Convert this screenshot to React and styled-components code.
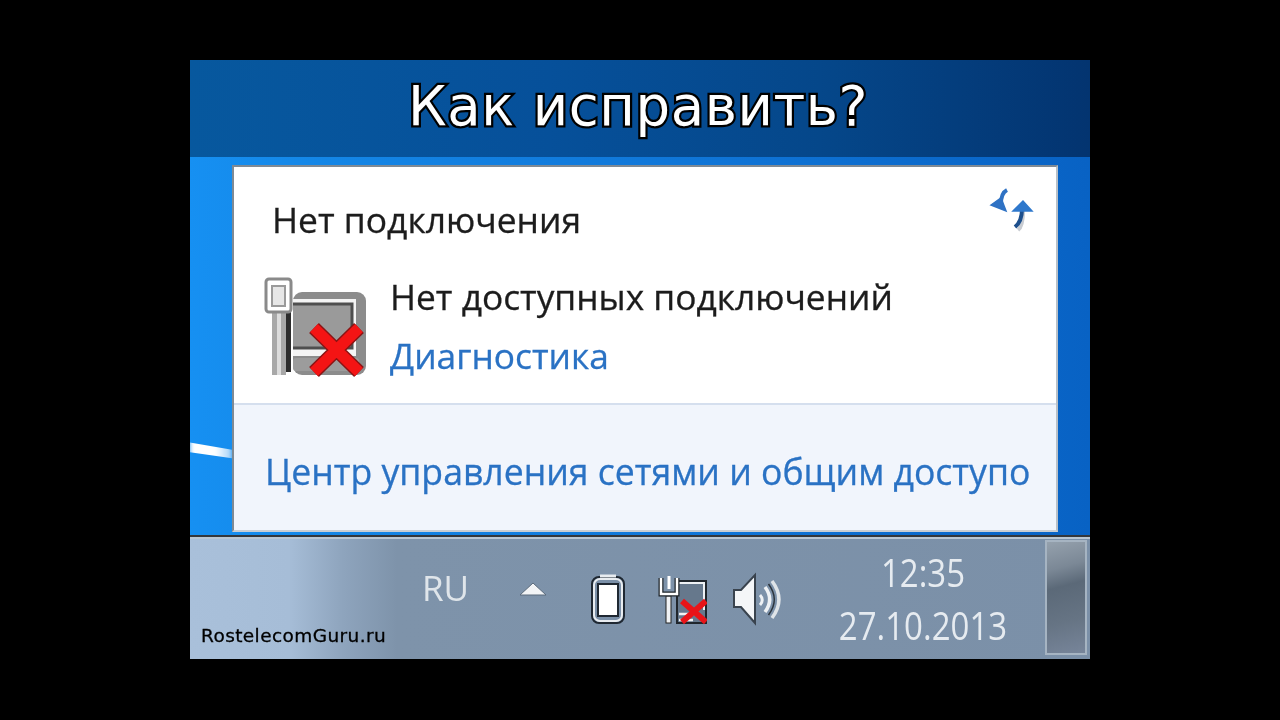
import React from 'react'
import styled, { createGlobalStyle } from 'styled-components'

const GlobalStyle = createGlobalStyle`
  html, body { margin: 0; padding: 0; background: #000; }
  body { font-family: "Open Sans", "Noto Sans", sans-serif; }
`

const Page = styled.div`
  width: 1280px;
  height: 720px;
  background: #000;
  display: flex;
  justify-content: center;
  padding-top: 60px;
  box-sizing: border-box;
  overflow: hidden;
`

const Screen = styled.div`
  width: 900px;
  height: 599px;
  display: flex;
  flex-direction: column;
  position: relative;
  filter: blur(0.7px);
`

const Header = styled.header`
  height: 92px;
  padding: 0 4px 7px 0;
  box-sizing: content-box;
  flex: none;
  display: flex;
  align-items: center;
  justify-content: center;
  margin-bottom: -2px;
  background: linear-gradient(90deg, #07589e 0%, #06509a 40%, #05478a 70%, #033470 100%);
`

const Title = styled.h1`
  margin: 0;
  font-family: "DejaVu Sans", sans-serif;
  font-weight: 400;
  font-size: 54.5px;
  letter-spacing: 0.6px;
  color: #fff;
  -webkit-text-stroke: 4.5px #000;
  paint-order: stroke fill;
`

const Desktop = styled.main`
  height: 380px;
  flex: none;
  position: relative;
  box-sizing: border-box;
  padding: 8px 32px 3px 42px;
  display: flex;
  background: linear-gradient(90deg, #1690f2 0%, #1486e6 15%, #0f74d6 60%, #0862c4 100%);
  border-bottom: 2px solid #33373c;
`

const Streak = styled.div`
  position: absolute;
  left: 0;
  top: 282px;
  width: 42px;
  height: 24px;
  background: linear-gradient(90deg, #fff, #fff 60%, rgba(255,255,255,0.6));
  clip-path: polygon(0 15%, 100% 45%, 100% 80%, 0 55%);
  filter: blur(2px);
`

const Popup = styled.section`
  flex: 1;
  display: flex;
  flex-direction: column;
  background: #fff;
  border: 2px solid #7f8a94;
  border-bottom-color: #c9ced4;
  border-right-color: #b8c0c8;
`

const MainPane = styled.div`
  height: 238px;
  flex: none;
  box-sizing: border-box;
  position: relative;
  padding: 30px 24px 0 38px;
  border-bottom: 2px solid #d5dfee;
`

const PopupTitle = styled.div`
  font-size: 35.4px;
  line-height: 44px;
  color: #1c1c1c;
  -webkit-text-stroke: 0.3px #1c1c1c;
`

const SyncButton = styled.div`
  position: absolute;
  right: 20px;
  top: 20px;
  width: 50px;
  height: 50px;
`

const Row = styled.div`
  display: flex;
  margin: 25px 0 0 -17px;
`

const Info = styled.div`
  margin-left: 15px;
  padding-top: 8px;
  display: flex;
  flex-direction: column;
  gap: 15px;
`

const RowTitle = styled.div`
  font-size: 35.3px;
  line-height: 44px;
  color: #1c1c1c;
  white-space: nowrap;
  -webkit-text-stroke: 0.3px #1c1c1c;
`

const LinkText = styled.a`
  font-size: ${({ $size }) => $size}px;
  line-height: 44px;
  color: #2a72c4;
  white-space: nowrap;
  -webkit-text-stroke: 0.3px #2a72c4;
`

const Footer = styled.div`
  flex: 1;
  background: #f1f5fc;
  padding: 44px 0 0 31px;
`

const Taskbar = styled.footer`
  flex: 1;
  position: relative;
  display: flex;
  align-items: flex-start;
  background: linear-gradient(90deg, #a9c0da 0%, #a6bdd7 11%, #8ea4bd 17%, #7e93aa 23%, #7b90a8 100%);
  border-top: 2px solid #b9c7d4;
  box-sizing: border-box;
`

const Watermark = styled.div`
  position: absolute;
  left: 11px;
  bottom: 11px;
  font-size: 18.5px;
  line-height: 24px;
  color: #000;
  letter-spacing: 0.4px;
  font-family: "DejaVu Sans", sans-serif;
  -webkit-text-stroke: 0.3px #000;
`

const Tray = styled.div`
  display: flex;
  align-items: center;
  height: 100%;
  padding-left: 232px;
`

const Lang = styled.div`
  font-size: 35px;
  line-height: 40px;
  color: #dfe5ea;
  width: 97px;
  margin-top: -22px;
`

const TrayIcon = styled.div`
  flex: none;
  width: ${({ $w }) => $w}px;
  height: 56px;
  margin-right: ${({ $gap }) => $gap}px;
  margin-top: ${({ $top }) => $top - 4}px;
`

const Clock = styled.div`
  width: 180px;
  text-align: center;
  margin-top: 2px;
  margin-left: 51px;
  font-size: 33px;
  line-height: 46px;
  color: #e6ebf0;
  transform: scaleY(1.15);
`

const ShowDesktop = styled.div`
  position: absolute;
  right: 3px;
  top: 1px;
  bottom: 4px;
  width: 42px;
  border: 2px solid #a6b4c2;
  box-sizing: border-box;
  background: linear-gradient(165deg, #95a1ad 0%, #7b8896 24%, #5b6978 40%, #667484 70%, #77859a 100%);
`

const NetworkIcon = () => (
  <svg width="120" height="120" viewBox="0 0 120 120">
    <rect x="38" y="26" width="73" height="83" rx="9" fill="#8c8c8c" />
    <path d="M38 33H101V90H38" fill="#f4f4f4" />
    <path d="M38 38H97V82H38" fill="#9a9a9a" stroke="#4e4e4e" strokeWidth="3" />
    <rect x="38" y="92" width="66" height="13" rx="3" fill="#9c9c9c" />
    <rect x="17" y="46" width="14" height="63" fill="#a8a8a8" />
    <rect x="31" y="46" width="5" height="60" fill="#2c2c2c" />
    <rect x="22" y="46" width="4" height="63" fill="#dcdcdc" />
    <rect x="11" y="13" width="25" height="33" rx="3" fill="#fff" stroke="#8a8a8a" strokeWidth="3" />
    <rect x="17" y="20" width="13" height="20" fill="#e6e6e6" stroke="#9a9a9a" strokeWidth="2" />
    <path d="M59 62L104 106M104 62L59 106" stroke="#8a1414" strokeWidth="14" />
    <path d="M59 62L104 106M104 62L59 106" stroke="#f41414" strokeWidth="11" />
  </svg>
)

const SyncIcon = () => (
  <svg width="50" height="50" viewBox="0 0 50 50">
    <path d="M21 3C17 5 15 9 15 17" fill="none" stroke="#2f72c4" strokeWidth="4" />
    <path d="M5 18L15 11L20 24Z" fill="#2f72c4" stroke="#2f72c4" strokeWidth="1.5" />
    <path d="M32 43C36 40 37 34 37 24" fill="none" stroke="#c8ccd2" strokeWidth="4" />
    <path d="M29 40C34 36 36 30 36 22" fill="none" stroke="#1d4f8c" strokeWidth="4" />
    <path d="M37 14L27 24L46 24Z" fill="#2f78cc" stroke="#2f78cc" strokeWidth="1.5" />
  </svg>
)

const ArrowIcon = () => (
  <svg width="28" height="20" viewBox="0 0 28 20">
    <path d="M1 16L14 4L27 16Z" fill="#f2f4f6" stroke="#5b6b7c" strokeWidth="1" />
  </svg>
)

const BatteryIcon = () => (
  <svg width="38" height="56" viewBox="0 0 38 56">
    <rect x="3" y="6" width="32" height="46" rx="7" fill="#7b90a8" stroke="#1f2832" strokeWidth="2" />
    <path d="M11 5h16" stroke="#e8ecf0" strokeWidth="3" />
    <rect x="5" y="8" width="28" height="42" rx="6" fill="none" stroke="#e8ecf0" strokeWidth="2" />
    <rect x="9" y="13" width="20" height="32" fill="#fff" stroke="#1f2832" strokeWidth="2" />
  </svg>
)

const TrayNetworkIcon = () => (
  <svg width="52" height="56" viewBox="0 0 52 56">
    <rect x="22" y="11" width="29" height="42" fill="#66788c" stroke="#20262c" strokeWidth="2" />
    <path d="M24 13H49V40" fill="none" stroke="#eef1f4" strokeWidth="2" />
    <path d="M24 44H44M24 50H38" stroke="#f4f4f4" strokeWidth="2.5" />
    <rect x="11" y="26" width="5" height="27" fill="#f0f2f4" stroke="#222" strokeWidth="1" />
    <path d="M6 8V24H22V8" fill="none" stroke="#1e242a" strokeWidth="5" />
    <path d="M6 8V24H22V8" fill="none" stroke="#fff" strokeWidth="2.5" />
    <path d="M14 6V19" stroke="#fff" strokeWidth="3" />
    <path d="M27 31L51 52M51 31L27 52" stroke="#e81418" strokeWidth="6" />
  </svg>
)

const VolumeIcon = () => (
  <svg width="52" height="56" viewBox="0 0 52 56">
    <path d="M4 19H11L25 4V52L11 36H4Z" fill="#f4f6f8" stroke="#39434e" strokeWidth="2" />
    <path d="M30 24C33 27 33 31 30 34" fill="none" stroke="#eef1f4" strokeWidth="3" />
    <path d="M35 16C41 24 41 33 35 41" fill="none" stroke="#eef1f4" strokeWidth="3.5" />
    <path d="M42 10C51 22 51 35 42 47" fill="none" stroke="#dfe4e8" strokeWidth="3.5" />
    <path d="M38.5 13C46 23 46 34 38.5 44" fill="none" stroke="#2c343c" strokeWidth="1.5" />
  </svg>
)

export default function App() {
  return (
    <>
      <GlobalStyle />
      <Page>
        <Screen>
          <Header>
            <Title>Как исправить?</Title>
          </Header>
          <Desktop>
            <Streak />
            <Popup>
              <MainPane>
                <PopupTitle>Нет подключения</PopupTitle>
                <SyncButton>
                  <SyncIcon />
                </SyncButton>
                <Row>
                  <NetworkIcon />
                  <Info>
                    <RowTitle>Нет доступных подключений</RowTitle>
                    <LinkText $size={35.3}>Диагностика</LinkText>
                  </Info>
                </Row>
              </MainPane>
              <Footer>
                <LinkText $size={35.6}>Центр управления сетями и общим доступо</LinkText>
              </Footer>
            </Popup>
          </Desktop>
          <Taskbar>
            <Tray>
              <Lang>RU</Lang>
              <TrayIcon $w={28} $gap={42} $top={20}><ArrowIcon /></TrayIcon>
              <TrayIcon $w={38} $gap={28} $top={3}><BatteryIcon /></TrayIcon>
              <TrayIcon $w={52} $gap={23} $top={1}><TrayNetworkIcon /></TrayIcon>
              <TrayIcon $w={52} $gap={0} $top={4}><VolumeIcon /></TrayIcon>
              <Clock>
                12:35
                <br />
                27.10.2013
              </Clock>
            </Tray>
            <Watermark>RostelecomGuru.ru</Watermark>
            <ShowDesktop />
          </Taskbar>
        </Screen>
      </Page>
    </>
  )
}
